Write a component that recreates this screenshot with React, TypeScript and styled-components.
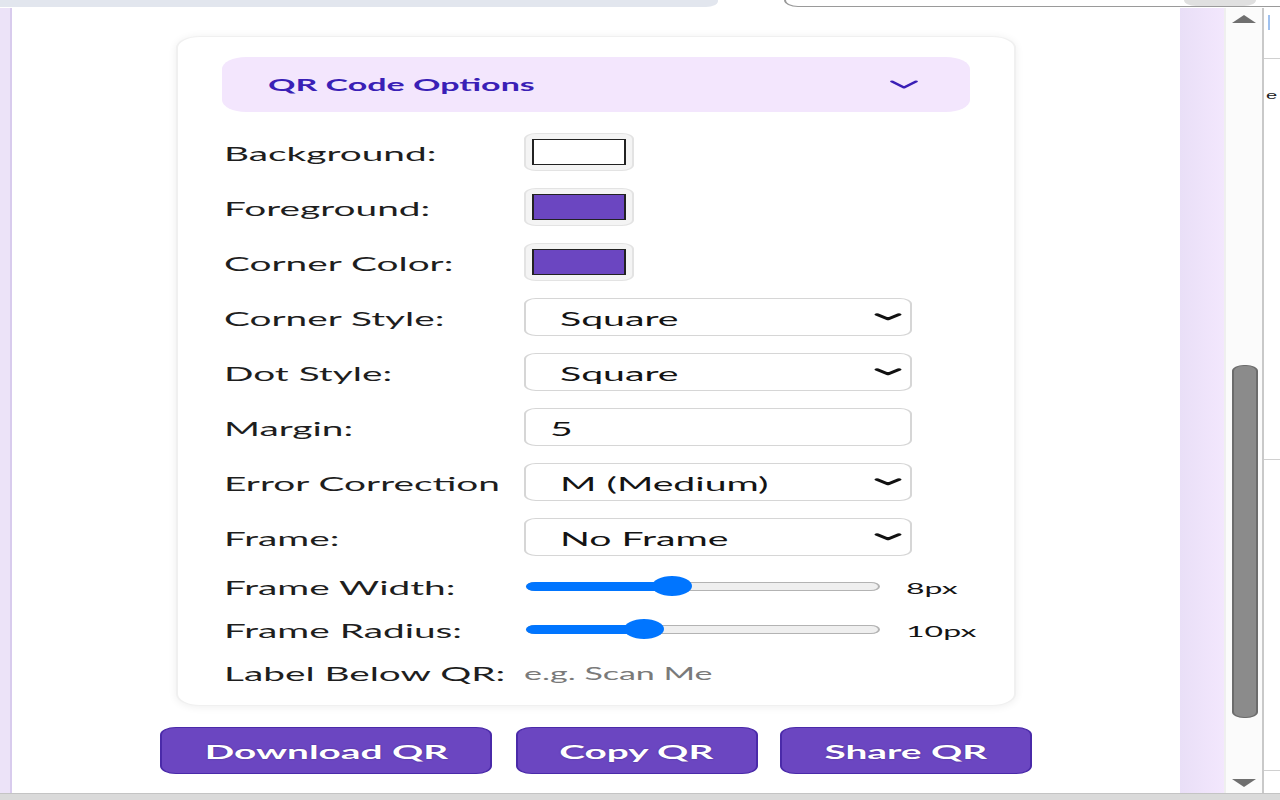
import React from "react";
import styled, { createGlobalStyle } from "styled-components";

const GlobalStyle = createGlobalStyle`
  html, body {
    margin: 0;
    padding: 0;
    width: 1280px;
    height: 800px;
    overflow: hidden;
    background: #ffffff;
  }
  * {
    box-sizing: border-box;
  }
`;

// the screenshot is stretched 2x horizontally, so the page is laid out at 640px and scaled
const Stage = styled.div`
  width: 640px;
  height: 800px;
  transform: scaleX(2);
  transform-origin: 0 0;
  display: flex;
  flex-direction: column;
  font-family: "Lato", "Open Sans", sans-serif;
  color: #1c1c1c;
`;

const TopStrip = styled.div`
  height: 8px;
  display: flex;
  background: #ffffff;
`;

const TabShape = styled.div`
  width: 359px;
  height: 7px;
  background: #e2e6ee;
  border-bottom-right-radius: 6px;
`;

const TabOutline = styled.div`
  margin-left: 33px;
  flex: 1;
  height: 7px;
  border-bottom: 1px solid #9a9a9a;
  border-left: 1px solid #9a9a9a;
  border-bottom-left-radius: 8px;
  display: flex;
  justify-content: flex-end;
  padding-right: 12px;
`;

const TabPill = styled.div`
  width: 36px;
  height: 6px;
  background: #e0e0e0;
  border-radius: 0 0 6px 6px;
`;

const Body = styled.div`
  flex: 1;
  display: flex;
  min-height: 0;
`;

const LeftRail = styled.div`
  width: 6px;
  background: #ece3f8;
  border-right: 1px solid #d8cbed;
`;

const Main = styled.main`
  width: 584px;
  background: #ffffff;
  display: flex;
  flex-direction: column;
  align-items: center;
  padding-top: 28px;
`;

const RightRail = styled.div`
  width: 22px;
  background: linear-gradient(to right, #e9dff7, #f3e7fd);
`;

const Scrollbar = styled.div`
  width: 19px;
  background: #fbfbfb;
  border-left: 1px solid #efefef;
  display: flex;
  flex-direction: column;
  align-items: center;
  padding: 7px 0 6px;
`;

const Arrow = styled.div<{ $down?: boolean }>`
  width: 0;
  height: 0;
  border-left: 6.5px solid transparent;
  border-right: 6.5px solid transparent;
  ${(p) =>
    p.$down
      ? "border-top: 8px solid #6f6f6f; margin-top: auto;"
      : "border-bottom: 8px solid #6f6f6f;"}
`;

const ScrollThumb = styled.div`
  margin-top: 342px;
  width: 13px;
  height: 353px;
  background: #8b8b8b;
  border: 1px solid #6c6c6c;
  border-radius: 6px;
`;

const NextPage = styled.div`
  width: 9px;
  background: #ffffff;
  border-left: 1px solid #c9c9c9;
  display: flex;
  flex-direction: column;
  overflow: hidden;
`;

const BlueTick = styled.div`
  margin: 7px 0 0 2px;
  width: 1px;
  height: 15px;
  background: #9fc1ef;
`;

const PageRule = styled.div<{ $gap: number }>`
  margin-top: ${(p) => p.$gap}px;
  height: 1px;
  background: #d0d0d0;
`;

const PageLetter = styled.span`
  margin-top: 30px;
  font-family: "Liberation Sans", sans-serif;
  font-size: 10px;
  line-height: 14px;
  color: #222;
  padding-left: 1px;
`;

const BottomStrip = styled.div`
  height: 7px;
  background: #dadada;
  border-top: 1px solid #c4c4c4;
`;

const Card = styled.section`
  width: 420px;
  background: #ffffff;
  border: 1px solid #f0f0f0;
  border-radius: 12px;
  box-shadow: 0 1px 6px rgba(0, 0, 0, 0.07);
  padding: 20px 22px 20px 22px;
`;

const AccordionHeader = styled.div`
  height: 55px;
  background: #f3e6fd;
  border-radius: 12px;
  display: flex;
  align-items: center;
  justify-content: space-between;
  padding: 0 26px 0 23px;
`;

const AccordionTitle = styled.span`
  font-size: 17px;
  font-weight: 700;
  color: #3a1fb6;
`;

const Fields = styled.div`
  margin-top: 21px;
  display: flex;
  flex-direction: column;
  gap: 17px;
`;

const Row = styled.div<{ $compact?: boolean }>`
  height: ${(p) => (p.$compact ? 26 : 38)}px;
  display: flex;
  align-items: center;
  padding-top: 2px;
`;

const Label = styled.label`
  width: 151px;
  flex-shrink: 0;
  padding-left: 1px;
  font-size: 19.4px;
  white-space: nowrap;
  color: #1e1e1e;
`;

const ColorButton = styled.div`
  width: 55px;
  height: 38px;
  margin-top: -2px;
  border: 1px solid #e3e3e3;
  border-radius: 6px;
  background: #f4f4f4;
  display: flex;
  align-items: center;
  justify-content: center;
`;

const Swatch = styled.span<{ $color: string }>`
  width: 47px;
  height: 26px;
  background: ${(p) => p.$color};
  border: 1px solid #222;
`;

const SelectWrap = styled.div`
  position: relative;
  width: 194px;
  height: 38px;
  margin-top: -2px;
`;

const Select = styled.select`
  appearance: none;
  width: 100%;
  height: 100%;
  border: 1px solid #d6d6d6;
  border-radius: 6px;
  background: #ffffff;
  padding: 2px 0 0 17px;
  font-family: inherit;
  font-size: 19.6px;
  color: #141414;
  outline: none;
`;

const SelectChevron = styled.svg`
  position: absolute;
  right: 5px;
  top: 15px;
  pointer-events: none;
`;

const TextInput = styled.input`
  width: 194px;
  height: 38px;
  margin-top: -2px;
  border: 1px solid #d6d6d6;
  border-radius: 6px;
  padding: 2px 0 0 12px;
  font-family: inherit;
  font-size: 19.6px;
  color: #141414;
  outline: none;
`;

const PlainInput = styled.input`
  width: 190px;
  border: none;
  padding: 0;
  background: transparent;
  font-family: inherit;
  font-size: 17px;
  color: #141414;
  outline: none;
  &::placeholder {
    color: #7a7a7a;
  }
`;

const SliderTrack = styled.div`
  position: relative;
  flex-shrink: 0;
  margin: -2px 0 0 1px;
  width: 177px;
  height: 9px;
  border: 1px solid #b3b3b3;
  border-radius: 5px;
  background: #efefef;
`;

const SliderFill = styled.div`
  position: absolute;
  left: -1px;
  top: -1px;
  bottom: -1px;
  background: #0075ff;
  border-radius: 5px;
`;

const SliderThumb = styled.div`
  position: absolute;
  top: 50%;
  width: 20px;
  height: 20px;
  margin: -10px 0 0 -10px;
  border-radius: 50%;
  background: #0075ff;
`;

const SliderValue = styled.span`
  margin-left: 13px;
  flex-shrink: 0;
  white-space: nowrap;
  font-size: 16px;
  color: #141414;
`;

const ButtonRow = styled.div`
  margin-top: 21px;
  display: flex;
  gap: 11.5px;
`;

const ActionButton = styled.button`
  height: 47px;
  padding: 2px 21px 0;
  background: #6b46c1;
  border: 1.5px solid #4a2aa9;
  border-radius: 8px;
  color: #ffffff;
  font-family: inherit;
  font-size: 19.4px;
  font-weight: 700;
  text-shadow: 0 0 1px rgba(30, 10, 80, 0.6);
  cursor: pointer;
`;

const ChevronDown = () => (
  <svg width="14" height="9" viewBox="0 0 14 9">
    <path d="M1 1.5 L7 7.5 L13 1.5" fill="none" stroke="#3a1fb6" strokeWidth="1.8" strokeLinecap="round" strokeLinejoin="round" />
  </svg>
);

const SelectField: React.FC<{ value: string; options: string[] }> = ({ value, options }) => (
  <SelectWrap>
    <Select defaultValue={value}>
      {options.map((o) => (
        <option key={o}>{o}</option>
      ))}
    </Select>
    <SelectChevron width="14" height="8" viewBox="0 0 14 8">
      <path d="M1.5 1.5 L7 6 L12.5 1.5" fill="none" stroke="#111" strokeWidth="2.4" strokeLinecap="round" strokeLinejoin="round" />
    </SelectChevron>
  </SelectWrap>
);

const RangeField: React.FC<{ value: number; max: number }> = ({ value, max }) => {
  const usable = 177 - 20;
  const center = 10 + (value / max) * usable;
  return (
    <>
      <SliderTrack>
        <SliderFill style={{ width: center }} />
        <SliderThumb style={{ left: center - 1 }} />
      </SliderTrack>
      <SliderValue>{value}px</SliderValue>
    </>
  );
};

const App: React.FC = () => {
  return (
    <>
      <GlobalStyle />
      <Stage>
        <TopStrip>
          <TabShape />
          <TabOutline>
            <TabPill />
          </TabOutline>
        </TopStrip>
        <Body>
          <LeftRail />
          <Main>
            <Card>
              <AccordionHeader>
                <AccordionTitle>QR Code Options</AccordionTitle>
                <ChevronDown />
              </AccordionHeader>
              <Fields>
                <Row>
                  <Label>Background:</Label>
                  <ColorButton>
                    <Swatch $color="#ffffff" />
                  </ColorButton>
                </Row>
                <Row>
                  <Label>Foreground:</Label>
                  <ColorButton>
                    <Swatch $color="#6b46c1" />
                  </ColorButton>
                </Row>
                <Row>
                  <Label>Corner Color:</Label>
                  <ColorButton>
                    <Swatch $color="#6b46c1" />
                  </ColorButton>
                </Row>
                <Row>
                  <Label>Corner Style:</Label>
                  <SelectField value="Square" options={["Square", "Dot", "Extra Rounded"]} />
                </Row>
                <Row>
                  <Label>Dot Style:</Label>
                  <SelectField value="Square" options={["Square", "Dots", "Rounded"]} />
                </Row>
                <Row>
                  <Label>Margin:</Label>
                  <TextInput type="number" defaultValue={5} />
                </Row>
                <Row>
                  <Label>Error Correction</Label>
                  <SelectField value="M (Medium)" options={["L (Low)", "M (Medium)", "Q (Quartile)", "H (High)"]} />
                </Row>
                <Row>
                  <Label>Frame:</Label>
                  <SelectField value="No Frame" options={["No Frame", "Simple", "Rounded"]} />
                </Row>
                <Row $compact>
                  <Label>Frame Width:</Label>
                  <RangeField value={8} max={20} />
                </Row>
                <Row $compact>
                  <Label>Frame Radius:</Label>
                  <RangeField value={10} max={32} />
                </Row>
                <Row $compact>
                  <Label>Label Below QR:</Label>
                  <PlainInput placeholder="e.g. Scan Me" />
                </Row>
              </Fields>
            </Card>
            <ButtonRow>
              <ActionButton>Download QR</ActionButton>
              <ActionButton>Copy QR</ActionButton>
              <ActionButton>Share QR</ActionButton>
            </ButtonRow>
          </Main>
          <RightRail />
          <Scrollbar>
            <Arrow />
            <ScrollThumb />
            <Arrow $down />
          </Scrollbar>
          <NextPage>
            <BlueTick />
            <PageRule $gap={28} />
            <PageLetter>e</PageLetter>
            <PageRule $gap={356} />
            <PageRule $gap={310} />
          </NextPage>
        </Body>
        <BottomStrip />
      </Stage>
    </>
  );
};

export default App;
